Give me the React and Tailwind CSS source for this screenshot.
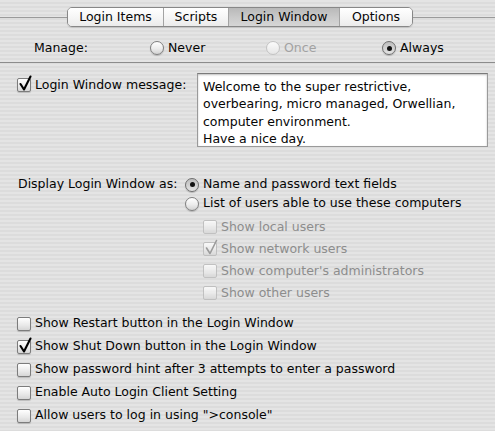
import React from "react";

const tabs = [
  { label: "Login Items", w: "w-[95px]" },
  { label: "Scripts", w: "w-[65px]" },
  { label: "Login Window", w: "w-[111px]", active: true },
  { label: "Options", w: "w-[73px]" },
];

const subOptions = [
  { label: "Show local users" },
  { label: "Show network users", on: true },
  { label: "Show computer's administrators" },
  { label: "Show other users" },
];

const bottomOptions = [
  { label: "Show Restart button in the Login Window" },
  { label: "Show Shut Down button in the Login Window", on: true },
  { label: "Show password hint after 3 attempts to enter a password" },
  { label: "Enable Auto Login Client Setting" },
  { label: 'Allow users to log in using ">console"' },
];

function Check({ on, off }) {
  return (
    <span
      className={`relative block w-[14px] h-[14px] shrink-0 rounded-[2px] border bg-[linear-gradient(#ffffff,#e9e9e9_60%,#d6d6d6)] ${
        off ? "border-[#b9b9b9] opacity-80" : "border-[#7c7c7c] shadow-[0_1px_1px_rgba(0,0,0,0.18)]"
      }`}
    >
      {on && (
        <svg className="absolute -top-[4px] -left-[1px] w-[16px] h-[18px]" viewBox="0 0 16 18">
          <path
            d="M3.5 9 L7 14.5 L13.5 1.5"
            fill="none"
            stroke={off ? "#8a8a8a" : "#000"}
            strokeWidth={off ? 1.6 : 2.1}
            strokeLinecap="round"
            strokeLinejoin="round"
          />
        </svg>
      )}
    </span>
  );
}

function Radio({ on, off }) {
  return (
    <span
      className={`flex items-center justify-center w-[14px] h-[14px] shrink-0 rounded-full border ${
        off
          ? "border-[#c3c3c3] bg-[linear-gradient(#fbfbfb,#e6e6e6)]"
          : on
          ? "border-[#6f6f6f] bg-[linear-gradient(#bdbdbd,#e4e4e4)] shadow-[0_1px_1px_rgba(0,0,0,0.2)]"
          : "border-[#7f7f7f] bg-[linear-gradient(#ffffff,#ececec_55%,#d2d2d2)] shadow-[0_1px_1px_rgba(0,0,0,0.18)]"
      }`}
    >
      {on && <span className="w-[5px] h-[5px] rounded-full bg-[#111]" />}
    </span>
  );
}

export default function App() {
  return (
    <div className="w-[495px] h-[431px] overflow-hidden bg-[image:repeating-linear-gradient(180deg,#e4e4e4_0px,#e4e4e4_2px,#dcdcdc_2px,#dcdcdc_4px)] font-['DejaVu_Sans',sans-serif] text-[12.5px] text-[#050505]">
      {/* Tab strip */}
      <div className="flex items-center pt-[7px] h-[27px]">
        <div className="w-[67px] h-px bg-[#9a9a9a]" />
        <div className="flex h-[20px] rounded-[5px] border border-[#878787] overflow-hidden shadow-[0_1px_1px_rgba(0,0,0,0.12)]">
          {tabs.map((t, i) => (
            <div
              key={t.label}
              className={`${t.w} flex items-center justify-center ${i > 0 ? "border-l border-[#a3a3a3]" : ""} ${
                t.active
                  ? "bg-[linear-gradient(#b9b9b9,#c9c9c9_50%,#d6d6d6)]"
                  : "bg-[linear-gradient(#ffffff,#f6f6f6_50%,#ebebeb)]"
              }`}
            >
              {t.label}
            </div>
          ))}
        </div>
        <div className="flex-1 h-px bg-[#9a9a9a]" />
      </div>

      {/* Manage row */}
      <div className="grid grid-cols-[116px_116px_116px_auto] items-center h-[20px] mt-[11px] pl-[34px]">
        <span>Manage:</span>
        <div className="flex items-center gap-[4px]">
          <Radio />
          <span>Never</span>
        </div>
        <div className="flex items-center gap-[4px] text-[#a2a2a2]">
          <Radio off />
          <span>Once</span>
        </div>
        <div className="flex items-center gap-[4px]">
          <Radio on />
          <span>Always</span>
        </div>
      </div>

      <div className="mt-[4px] h-px bg-[#8c8c8c]" />

      {/* Login window message */}
      <div className="flex items-start mt-[10px]">
        <div className="w-[197px] pl-[17px] mt-[5px] h-[14px] flex items-center gap-[4px]">
          <Check on />
          <span>Login Window message:</span>
        </div>
        <div className="w-[291px] h-[74px] bg-white border border-[#9a9a9a] border-t-[#7a7a7a] shadow-[inset_0_1px_2px_rgba(0,0,0,0.25)] pl-[5px] pt-[4px] leading-[17.3px]">
          <div>Welcome to the super restrictive,</div>
          <div>overbearing, micro managed, Orwellian,</div>
          <div>computer environment.</div>
          <div>Have a nice day.</div>
        </div>
      </div>

      {/* Display login window as */}
      <div className="flex mt-[28px]">
        <div className="w-[185px] pl-[18px] h-[19px] flex items-center">Display Login Window as:</div>
        <div className="flex flex-col">
          <div className="h-[19px] flex items-center gap-[4px]">
            <Radio on />
            <span>Name and password text fields</span>
          </div>
          <div className="h-[19px] flex items-center gap-[4px]">
            <Radio />
            <span>List of users able to use these computers</span>
          </div>
          <div className="mt-[3px] pl-[18px] flex flex-col text-[#8d8d8d]">
            {subOptions.map((o) => (
              <div key={o.label} className="h-[22px] flex items-center gap-[4px]">
                <Check on={o.on} off />
                <span>{o.label}</span>
              </div>
            ))}
          </div>
        </div>
      </div>

      {/* Bottom options */}
      <div className="mt-[8px] pl-[17px] flex flex-col">
        {bottomOptions.map((o) => (
          <div key={o.label} className="h-[23px] flex items-center gap-[4px]">
            <Check on={o.on} />
            <span>{o.label}</span>
          </div>
        ))}
      </div>
    </div>
  );
}
